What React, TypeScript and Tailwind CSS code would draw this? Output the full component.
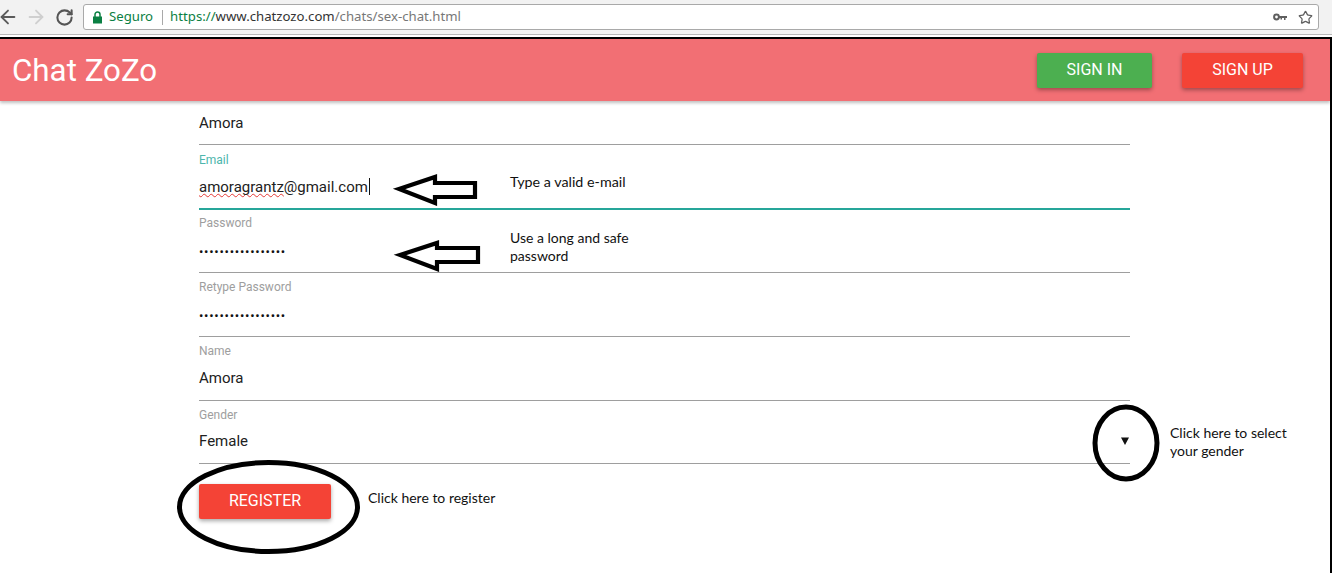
import React from "react";
import { ArrowLeft, ArrowRight, RotateCw, Star } from "lucide-react";

const PASSWORD_DOTS = "•".repeat(17);

type FieldProps = {
  label: string;
  value: string;
  active?: boolean;
  secret?: boolean;
  last?: boolean;
  children?: React.ReactNode;
};

function Field({ label, value, active, secret, last, children }: FieldProps) {
  return (
    <div
      className={
        active
          ? "h-[65px] -mb-px border-b-2 border-[#26a69a] flex flex-col"
          : last
            ? "h-[63px] border-b border-[#9e9e9e] flex flex-col"
            : "h-[64px] border-b border-[#9e9e9e] flex flex-col"
      }
    >
      <label
        className={
          active
            ? "mt-[8px] h-[14px] text-[12px] leading-[14px] text-[#4db6ac]"
            : "mt-[7px] h-[14px] text-[12px] leading-[14px] text-[#9e9e9e]"
        }
      >
        {label}
      </label>
      {secret ? (
        <div className="mt-[11px] h-[22px] text-[13px] leading-[22px] tracking-[0.73px] text-[#111]">{value}</div>
      ) : (
        <div
          className={
            active
              ? "mt-[9px] text-[15px] leading-[22px] text-[#212121]"
              : last
                ? "mt-[8px] text-[15px] leading-[22px] text-[#212121]"
                : "mt-[9px] text-[15px] leading-[22px] text-[#212121]"
          }
        >
          {children ?? value}
        </div>
      )}
    </div>
  );
}

function ArrowNote({ top, points }: { top: number; points: string }) {
  return (
    <svg
      className="absolute left-[390px] w-[95px] h-[36px]"
      style={{ top }}
      viewBox="0 0 95 36"
      fill="none"
    >
      <polygon points={points} stroke="#000" strokeWidth="4.2" />
    </svg>
  );
}

export default function App() {
  return (
    <div className="relative w-[1332px] h-[573px] overflow-hidden bg-white font-['Roboto',sans-serif]">
      {/* browser toolbar */}
      <div className="h-[35px] bg-[#f2f2f2] border-b border-[#b9b9b9] flex items-center">
        <div className="-ml-[6px] w-[28px] flex justify-center shrink-0">
          <ArrowLeft className="w-[22px] h-[22px] text-[#5a5a5a]" strokeWidth={2} />
        </div>
        <div className="w-[28px] flex justify-center shrink-0">
          <ArrowRight className="w-[22px] h-[22px] text-[#cfcfcf]" strokeWidth={2} />
        </div>
        <div className="w-[28px] flex justify-center shrink-0">
          <RotateCw className="w-[19px] h-[19px] text-[#555]" strokeWidth={2.6} />
        </div>
        <div className="ml-[5px] w-[1236px] h-[26px] bg-white border border-[#a9a9a9] rounded-[3px] flex items-center font-['Noto_Sans',sans-serif] text-[13.200px]">
          <svg className="ml-[8px] w-[11px] h-[13px] shrink-0" viewBox="0 0 11 13">
            <path d="M1 5.5h9v7H1z" fill="#0b8043" />
            <path d="M3 6V3.600a2.500 2.500 0 0 1 5 0V6" fill="none" stroke="#0b8043" strokeWidth="1.5" />
          </svg>
          <span className="ml-[6px] text-[#0b8043]">Seguro</span>
          <span className="ml-[9px] w-px h-[15px] bg-[#a9a9a9]" />
          <span className="ml-[7px] text-[#0b8043]">https://</span>
          <span className="text-[#333]">www.chatzozo.com</span>
          <span className="text-[#777]">/chats/sex-chat.html</span>
          <div className="ml-auto mr-[5px] flex items-center gap-[11px]">
            <svg className="w-[14px] h-[8px]" viewBox="0 0 14 8">
              <circle cx="3.5" cy="4" r="2.4" fill="none" stroke="#5f5f5f" strokeWidth="2" />
              <path d="M5.500 3h8.500v2h-1.500v2h-1.500V5H9v1.500H7.500V5h-2z" fill="#5f5f5f" />
            </svg>
            <Star className="w-[15px] h-[15px] text-[#5f5f5f]" strokeWidth={2} />
          </div>
        </div>
      </div>

      {/* page, framed in black by whoever took the screenshot */}
      <div className="mt-[2px] h-[536px] border-t-2 border-r-2 border-black">
        <header className="h-[62px] bg-[#f26f74] flex items-center shadow-[0_2px_3px_rgba(0,0,0,0.25)]">
          <h1 className="ml-[12px] mt-[1px] text-[31.300px] leading-none text-white">Chat ZoZo</h1>
          <div className="ml-auto mr-[27px] flex items-center gap-[30px]">
            <button className="w-[115px] h-[35px] rounded-[2px] bg-[#4caf50] text-[16px] text-white shadow-[0_2px_4px_rgba(0,0,0,0.35)]">
              SIGN IN
            </button>
            <button className="w-[121px] h-[35px] rounded-[2px] bg-[#f44336] text-[16px] text-white shadow-[0_2px_4px_rgba(0,0,0,0.35)]">
              SIGN UP
            </button>
          </div>
        </header>

        <form className="ml-[199px] w-[931px]">
          <div className="h-[44px] border-b border-[#9e9e9e] pt-[11px] text-[15px] leading-[22px] text-[#212121]">
            Amora
          </div>
          <Field label="Email" value="amoragrantz@gmail.com" active>
            <span className="underline decoration-wavy decoration-[#e53935] decoration-1 underline-offset-1 [text-decoration-skip-ink:none]">
              amoragrantz
            </span>
            @gmail.com
            <span className="inline-block w-px h-[17px] ml-px align-[-3px] bg-[#111]" />
          </Field>
          <Field label="Password" value={PASSWORD_DOTS} secret />
          <Field label="Retype Password" value={PASSWORD_DOTS} secret />
          <Field label="Name" value="Amora" />
          <Field label="Gender" value="Female" last />
          <button
            type="button"
            className="mt-[20px] block w-[132px] h-[35px] pb-[1px] rounded-[2px] bg-[#f44336] text-[16px] text-white shadow-[0_2px_4px_rgba(0,0,0,0.35)]"
          >
            REGISTER
          </button>
        </form>
      </div>

      {/* annotations drawn over the page */}
      <ArrowNote top={170} points="9,19 45,7 45,13 85,13 85,27 45,27 45,33" />
      <ArrowNote top={236} points="10,19 47,7 47,12 88,12 88,26 47,26 47,33" />
      <svg className="absolute left-[170px] top-[455px] w-[200px] h-[104px]" viewBox="0 0 200 104" fill="none">
        <ellipse cx="98.500" cy="52" rx="89" ry="44.500" stroke="#000" strokeWidth="5" />
      </svg>
      <svg className="absolute left-[1088px] top-[400px] w-[76px] h-[86px]" viewBox="0 0 76 86" fill="none">
        <ellipse cx="38" cy="43" rx="31" ry="36" stroke="#000" strokeWidth="5" />
        <polygon points="33,37.500 41,37.500 37,45" fill="#111" />
      </svg>
      <div className="absolute left-[510px] top-[173px] text-[14.300px] leading-[18px] text-[#111] font-['Lato',sans-serif]">
        Type a valid e-mail
      </div>
      <div className="absolute left-[510px] top-[229px] w-[130px] text-[14px] leading-[18px] text-[#111] font-['Lato',sans-serif]">
        Use a long and safe password
      </div>
      <div className="absolute left-[1170px] top-[424px] w-[130px] text-[14px] leading-[18px] text-[#111] font-['Lato',sans-serif]">
        Click here to select your gender
      </div>
      <div className="absolute left-[368px] top-[489px] text-[14px] leading-[18px] text-[#111] font-['Lato',sans-serif]">
        Click here to register
      </div>
    </div>
  );
}
